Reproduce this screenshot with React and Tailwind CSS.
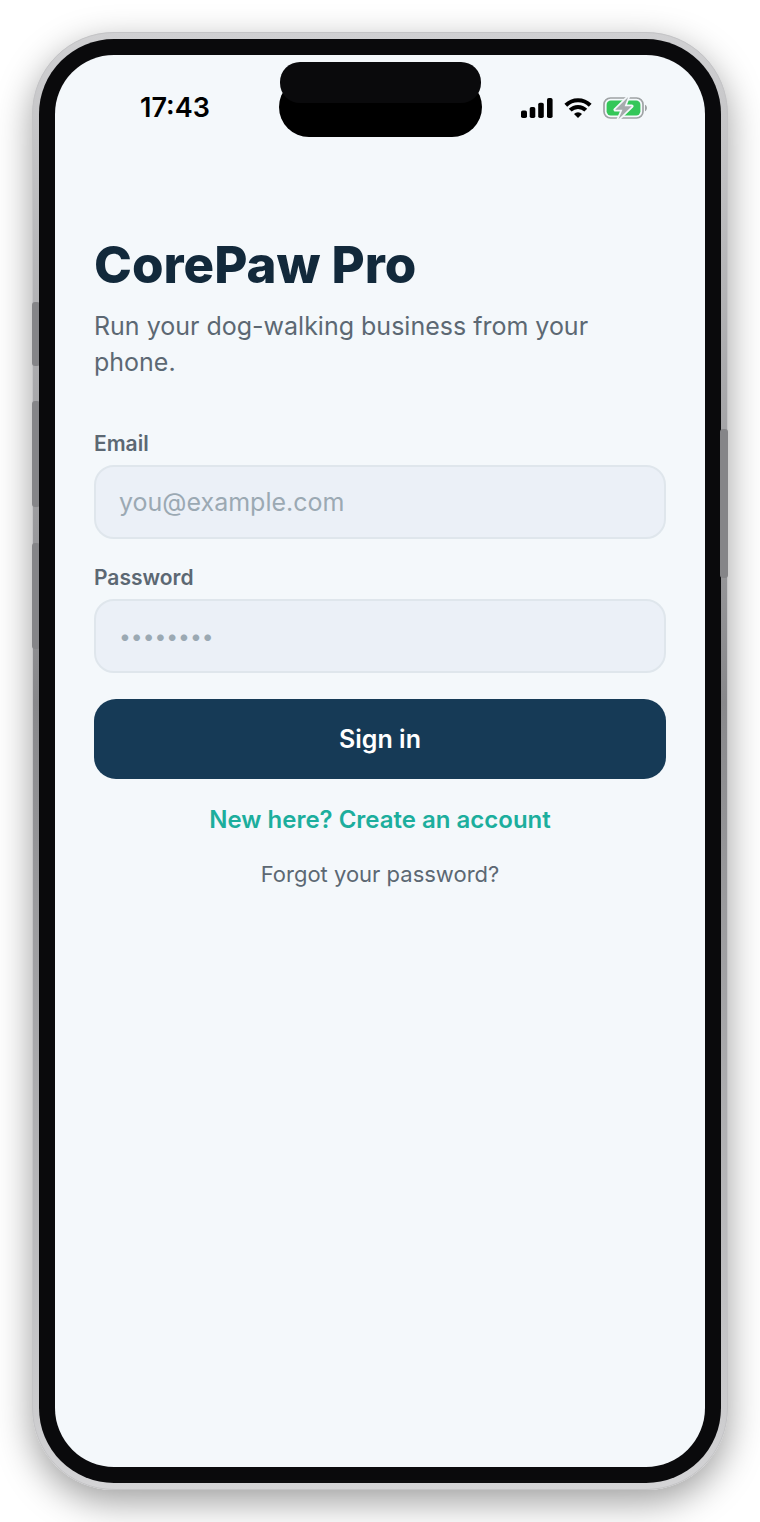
import React from 'react'

export default function App() {
  return (
    <main className="min-h-screen flex bg-white p-8 font-['Inter',sans-serif]">
      <PhoneFrame>
        <StatusBar />
        <LoginScreen />
      </PhoneFrame>
    </main>
  )
}

function PhoneFrame({ children }) {
  return (
    <div className="relative flex-1 flex p-[7px] rounded-[82px] bg-linear-to-b from-[#d0d0d2] via-[#88888b] via-46% to-[#d4d4d6] shadow-[0_12px_36px_rgba(0,0,0,0.38)]">
      {/* Metal rim */}
      <div className="absolute inset-0 rounded-[82px] border border-[#c4c4c6]" />

      {/* Side buttons */}
      <div className="absolute left-0 top-[270px] w-2 h-16 rounded-[3px] bg-[#858588]" />
      <div className="absolute left-0 top-[369px] w-2 h-[106px] rounded-[3px] bg-[#858588]" />
      <div className="absolute left-0 top-[511px] w-2 h-[106px] rounded-[3px] bg-[#858588]" />

      <div className="relative flex-1 flex p-4 rounded-[75px] bg-[#0a0a0c]">
        <div className="flex-1 flex flex-col rounded-[59px] bg-[#f4f8fb]">{children}</div>
      </div>

      <div className="absolute right-0 top-[397px] w-2 h-[149px] rounded-[3px] bg-[#858588]" />
    </div>
  )
}

function StatusBar() {
  return (
    <header className="grid grid-cols-[1fr_203px_1fr] items-end pt-[7px]">
      <div className="flex items-center h-[58px] pl-[85px]">
        <time className="text-[27px] leading-8 font-semibold text-black">17:43</time>
      </div>

      {/* Dynamic island */}
      <div className="relative h-[75px] flex items-end">
        <div className="w-full h-15 rounded-[30px] bg-black" />
        <div className="absolute inset-x-px top-0 h-[41px] rounded-[20px] bg-[#0a0a0c]" />
      </div>

      <div className="flex items-center justify-end gap-[11px] h-[58px] pr-[57px]">
        <SignalIcon />
        <WifiIcon />
        <BatteryIcon />
      </div>
    </header>
  )
}

function LoginScreen() {
  return (
    <section className="flex flex-col px-[39px] pt-[98px]">
      <h1 className="text-[51px] leading-[60px] font-extrabold text-[#12293b]">CorePaw Pro</h1>
      <p className="mt-[13px] max-w-[540px] text-[25px] leading-9 text-[#5c6873]">
        Run your dog-walking business from your phone.
      </p>

      <form className="mt-[51px] flex flex-col" onSubmit={(e) => e.preventDefault()}>
        <Field
          id="email"
          type="email"
          label="Email"
          placeholder="you@example.com"
          inputClass="text-[25px]"
        />
        <Field
          id="password"
          type="password"
          label="Password"
          placeholder="••••••••"
          inputClass="text-[21px]"
        />

        <button
          type="submit"
          className="h-20 rounded-[22px] bg-[#163a56] text-[25px] leading-8 font-semibold text-white"
        >
          Sign in
        </button>
      </form>

      <nav className="mt-[25px] flex flex-col items-center gap-[22px]">
        <a href="#signup" className="text-[24px] leading-8 font-semibold text-[#1cae9d]">
          New here? Create an account
        </a>
        <a href="#forgot" className="text-[22px] leading-8 text-[#5c6873]">
          Forgot your password?
        </a>
      </nav>
    </section>
  )
}

function Field({ id, type, label, placeholder, inputClass }) {
  return (
    <div className="mb-[26px] flex flex-col">
      <label htmlFor={id} className="mb-2 text-[21px] leading-[26px] font-semibold text-[#5c6873]">
        {label}
      </label>
      <input
        id={id}
        type={type}
        placeholder={placeholder}
        className={`h-[74px] px-[23px] rounded-[20px] border-2 border-[#dfe6ec] bg-[#ebf0f7] leading-8 text-[#12293b] placeholder:text-[#9ba9b3] outline-none ${inputClass}`}
      />
    </div>
  )
}

function SignalIcon() {
  return (
    <svg width="32" height="20" viewBox="0 0 32 20" fill="#000" aria-hidden="true">
      <rect x="0" y="12.5" width="6" height="7.5" rx="1.8" />
      <rect x="8.7" y="9" width="5.6" height="11" rx="1.8" />
      <rect x="17.2" y="4.8" width="5.6" height="15.2" rx="1.8" />
      <rect x="26" y="0" width="5.6" height="20" rx="1.8" />
    </svg>
  )
}

function WifiIcon() {
  return (
    <svg width="28" height="20" viewBox="0 0 28 20" aria-hidden="true">
      <g fill="none" stroke="#000" strokeWidth="4">
        <path d="M1.8 7.2a17.4 17.4 0 0 1 24.4 0" />
        <path d="M6.2 12.2a11 11 0 0 1 15.6 0" />
      </g>
      <path d="M14 20l-4-4.1a5.8 5.8 0 0 1 8 0z" fill="#000" />
    </svg>
  )
}

function BatteryIcon() {
  return (
    <svg width="45" height="24" viewBox="0 0 45 24" aria-hidden="true">
      <rect x="1" y="2" width="39" height="20" rx="6.5" fill="none" stroke="#9fa3a5" strokeWidth="1.7" />
      <path d="M42 8.8c2.6 1 2.6 5.4 0 6.4z" fill="#9fa3a5" />
      <rect x="3.6" y="4.6" width="33.8" height="14.8" rx="4.2" fill="#34c759" />
      <path
        d="M25.2 1L12.2 13.8h7.2l-4 9.4 13.4-13h-7.2z"
        fill="#a6abad"
        stroke="#f4f8fb"
        strokeWidth="3.4"
        strokeLinejoin="round"
        paintOrder="stroke"
      />
    </svg>
  )
}
